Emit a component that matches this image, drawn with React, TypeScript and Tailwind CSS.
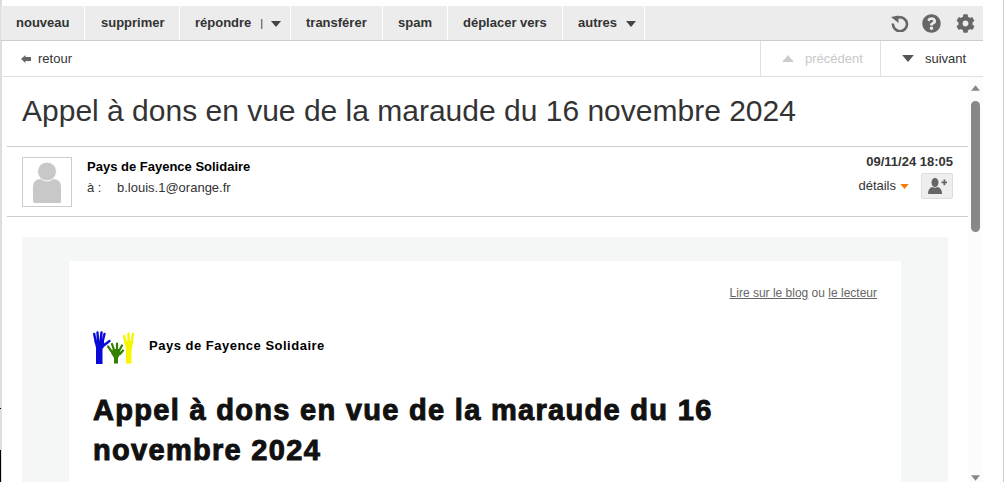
import { FaCog, FaQuestionCircle } from 'react-icons/fa'

function Caret({ className }: { className: string }) {
  return (
    <svg viewBox="0 0 10 6" className={className}>
      <path d="M0 0h10L5 6z" fill="currentColor" />
    </svg>
  )
}

function ToolButton({ label, className, caret, pipe }: { label: string; className: string; caret?: boolean; pipe?: boolean }) {
  return (
    <div className={`${className} flex h-full shrink-0 items-center border-r border-white`}>
      <span>{label}</span>
      {pipe && <span className="ml-[9px] text-[11px] font-normal text-[#333]">|</span>}
      {caret && <Caret className={pipe ? 'ml-[8px] mt-[2px] h-[6px] w-[10px] text-[#444]' : 'ml-[9px] mt-[2px] h-[6px] w-[10px] text-[#444]'} />}
    </div>
  )
}

function Hands() {
  return (
    <svg viewBox="0 0 44 34" className="h-[34px] w-[44px] shrink-0" fill="none" strokeLinecap="round">
      <g stroke="#0a0ad8" strokeWidth="2.400">
        <path d="M3 12L1.200 3M5 10L4.500 1.500M7.500 10L8.500 1.500M9.500 11L11.500 3M10 15L16.500 10" />
      </g>
      <path d="M3 33V17L1.500 10h9.500l.5 5-2 3v15z" fill="#0a0ad8" />
      <g stroke="#338000" strokeWidth="2.200">
        <path d="M19 21L15 15.500M21 19L19 13M24 18V12.500M26 20L29 14.500M27 23L30 19.500" />
      </g>
      <path d="M21 32.500V27l-3-5 2-4h6l2 4-3 5v5.500z" fill="#338000" />
      <g stroke="#f6f600" strokeWidth="2.400">
        <path d="M32.500 12L31.200 5M35.500 10V2.500M38.500 12L40 3" />
      </g>
      <path d="M33 32.500V19l-1.500-9h9l-2 9v13.500z" fill="#f6f600" />
    </svg>
  )
}

export default function App() {
  return (
    <div className="relative h-[482px] w-[1004px] overflow-hidden bg-white font-['Liberation_Sans',Arial,sans-serif] text-[13px] text-[#333]">
      <div className="h-[482px] w-[983px] border-l-2 border-[#ddd] pt-[6px]">
        {/* toolbar */}
        <div className="-ml-px flex h-[35px] items-center border-b border-[#ccc] bg-[#ececec] font-bold">
          <ToolButton label="nouveau" className="w-[84px] pl-[15px]" />
          <ToolButton label="supprimer" className="w-[95px] pl-[16px]" />
          <ToolButton label="répondre" className="w-[111px] pl-[15px]" caret pipe />
          <ToolButton label="transférer" className="w-[92px] pl-[15px]" />
          <ToolButton label="spam" className="w-[65px] pl-[15px]" />
          <ToolButton label="déplacer vers" className="w-[115px] pl-[15px]" />
          <ToolButton label="autres" className="w-[82px] pl-[15px]" caret />
          <div className="ml-auto mr-[8px] flex items-center gap-[15px] text-[#666]">
            <svg viewBox="0 0 18 18" className="-mr-[2px] h-[18px] w-[18px]">
              <path d="M7 3.500a7 7 0 1 1-5 6" fill="none" stroke="currentColor" strokeWidth="2.600" />
              <path d="M0 3l7.500-1.500v7.500z" fill="currentColor" />
            </svg>
            <FaQuestionCircle className="h-[19px] w-[19px]" />
            <FaCog className="h-[19px] w-[19px]" />
          </div>
        </div>

        {/* navigation */}
        <div className="flex h-[36px] items-center justify-between border-b border-[#e0e0e0]">
          <div className="flex items-center pl-[19px]">
            <svg viewBox="0 0 10 8" className="h-[8px] w-[10px] text-[#666]">
              <path d="M0 4l4.500-4v2H10v4H4.500v2z" fill="currentColor" />
            </svg>
            <span className="ml-[7px]">retour</span>
          </div>
          <div className="flex h-full">
            <div className="flex w-[120px] items-center border-l border-[#e0e0e0] pl-[20px] text-[#c8c8c8]">
              <Caret className="mr-[10px] h-[7px] w-[14px] rotate-180 text-[#ccc]" />
              précédent
            </div>
            <div className="flex w-[103px] items-center border-l border-[#e0e0e0] pl-[20px]">
              <Caret className="mr-[10px] h-[7px] w-[14px] text-[#555]" />
              suivant
            </div>
          </div>
        </div>

        <div className="flex h-[405px]">
          <div className="min-w-0 flex-1 overflow-hidden">
            <h1 className="h-[69px] pl-[20px] pt-[17px] text-[30px] leading-[34px] text-[#333]">
              Appel à dons en vue de la maraude du 16 novembre 2024
            </h1>

            {/* sender */}
            <div className="ml-[5px] flex h-[71px] border-y border-[#ccc] pl-[15px] pr-[15px] pt-[10px]">
              <div className="flex h-[50px] w-[50px] shrink-0 items-end justify-center overflow-hidden border border-[#ccc] pb-[3px]">
                <svg viewBox="0 0 28 41" className="h-[41px] w-[28px] text-[#c8c8c8]">
                  <path d="M0 39V25c0-5 3-8 8-8h12c5 0 8 3 8 8v16H2a2 2 0 0 1-2-2z" fill="currentColor" />
                  <circle cx="14" cy="9.500" r="9.500" fill="currentColor" stroke="#fff" />
                </svg>
              </div>
              <div className="ml-[15px] flex-1 pt-[1px]">
                <div className="font-bold leading-[18px] text-black">Pays de Fayence Solidaire</div>
                <div className="mt-[3px] flex leading-[18px]">
                  <span className="w-[30px]">à :</span>
                  <span>b.louis.1@orange.fr</span>
                </div>
              </div>
              <div className="flex flex-col items-end">
                <div className="font-bold leading-[10px]">09/11/24 18:05</div>
                <div className="mt-[6px] flex items-center">
                  <span>détails</span>
                  <Caret className="ml-[4px] h-[5px] w-[9px] text-[#f47b00]" />
                  <div className="ml-[12px] flex h-[26px] w-[32px] items-center justify-center rounded-[2px] border border-[#ddd] bg-[#eee]">
                    <svg viewBox="0 0 19 16" className="h-[16px] w-[19px] text-[#666]">
                      <path d="M3.500 4.500C3.500 2 5 0 7 0s3.500 2 3.500 4.500S9 9 7 9 3.500 7 3.500 4.500zM0 16c0-4 1.500-6.500 4.500-7 1.500 1 3.500 1 5 0 3 .5 4.500 3 4.500 7z" fill="currentColor" />
                      <path d="M13.500 3.500h2v-2h1.800v2h1.700v1.700h-1.700v2h-1.800v-2h-2z" fill="currentColor" />
                    </svg>
                  </div>
                </div>
              </div>
            </div>

            {/* message */}
            <div className="ml-[20px] mr-[20px] mt-[20px] h-[300px] bg-[#f5f7f6] px-[47px] pt-[24px]">
              <div className="h-[300px] bg-white px-[24px] pt-[23px]">
                <div className="text-right text-[12px] text-[#666]">
                  <span className="underline">Lire sur le blog</span> ou <span className="underline">le lecteur</span>
                </div>
                <div className="mt-[29px] flex items-center">
                  <Hands />
                  <span className="mb-[5px] ml-[12px] font-bold tracking-[0.5px] text-black">Pays de Fayence Solidaire</span>
                </div>
                <h2 className="mt-[25px] max-w-[680px] text-[29px] font-bold leading-[40px] tracking-[1.300px] text-[#111] [-webkit-text-stroke:1px_#111]">
                  Appel à dons en vue de la maraude du 16 novembre 2024
                </h2>
              </div>
            </div>
          </div>

          {/* scrollbar */}
          <div className="flex h-[405px] w-[15px] shrink-0 flex-col items-center bg-[#fcfcfc] pt-[8px]">
            <Caret className="h-[6px] w-[9px] rotate-180 text-[#888]" />
            <div className="mt-[10px] h-[131px] w-[9px] rounded-full bg-[#888]" />
            <div className="flex-1" />
            <Caret className="mb-[1px] h-[6px] w-[9px] text-[#888]" />
          </div>
        </div>
      </div>

      {/* stray window edges */}
      <div className="absolute right-0 top-0 h-full w-px bg-[#ccc]" />
      <div className="absolute bottom-0 left-0 h-[32px] w-px bg-black" />
      <div className="absolute left-0 top-[408px] h-px w-px bg-black" />
    </div>
  )
}
